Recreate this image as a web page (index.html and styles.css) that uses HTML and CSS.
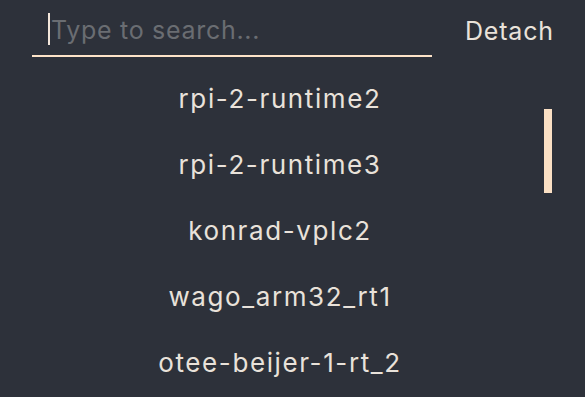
FILE: index.html
```html
<!DOCTYPE html>
<html>
<head>
<meta charset="utf-8">
<link rel="stylesheet" href="styles.css">
</head>
<body>
<div class="panel">
  <div class="header">
    <div class="search">
      <span class="caret"></span>
      <span class="placeholder">Type to search...</span>
    </div>
    <button class="detach">Detach</button>
  </div>
  <div class="body">
    <ul class="list">
      <li>rpi-2-runtime2</li>
      <li>rpi-2-runtime3</li>
      <li>konrad-vplc2</li>
      <li>wago_arm32_rt1</li>
      <li>otee-beijer-1-rt_2</li>
    </ul>
    <div class="scroll"><div class="thumb"></div></div>
  </div>
</div>
</body>
</html>
```
FILE: styles.css
```css
html, body {
  margin: 0;
  padding: 0;
  background: #2d313a;
  width: 585px;
  height: 397px;
  overflow: hidden;
  font-family: Inter, "Noto Sans", sans-serif;
  color: #e9e2da;
}
.panel {
  display: flex;
  flex-direction: column;
}
.header {
  display: flex;
  align-items: flex-start;
  padding-left: 32px;
  height: 57px;
}
.search {
  width: 400px;
  height: 57px;
  box-sizing: border-box;
  border-bottom: 2px solid #fde3c8;
  display: flex;
  align-items: flex-start;
  padding: 13px 0 0 16px;
}
.caret {
  width: 2px;
  height: 32px;
  background: #f3e6da;
}
.placeholder {
  font-size: 25px;
  line-height: 34px;
  letter-spacing: 0.7px;
  color: #6a6d72;
  margin-left: 1px;
}
.detach {
  background: none;
  border: none;
  font-family: inherit;
  font-size: 25px;
  line-height: 30px;
  letter-spacing: 0.8px;
  color: #e9e2da;
  margin: 16px 0 0 33px;
  padding: 0;
}
.body {
  display: flex;
}
.list {
  list-style: none;
  margin: 0;
  padding: 27px 0 0 16px;
  width: 528px;
}
.list li {
  text-align: center;
  font-size: 26px;
  letter-spacing: 1.6px;
  height: 66px;
  line-height: 30px;
}
.scroll {
  padding-top: 52px;
}
.thumb {
  width: 8px;
  height: 84px;
  background: #fbe0c4;
}
```
